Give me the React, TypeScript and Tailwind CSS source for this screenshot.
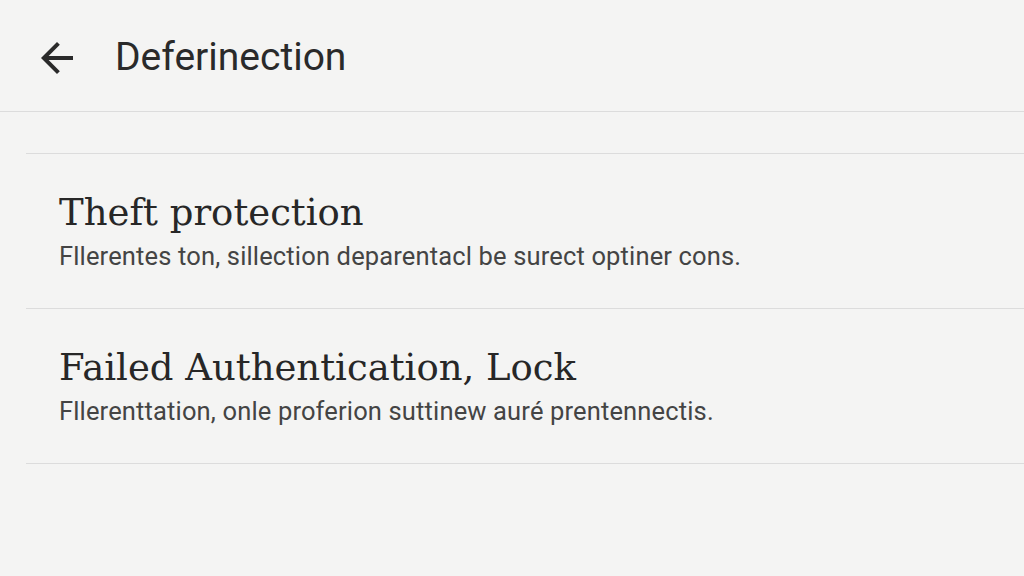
export default function App() {
  const items = [
    {
      title: "Theft protection",
      sub: "Fllerentes ton, sillection deparentacl be surect optiner cons.",
    },
    {
      title: "Failed Authentication, Lock",
      sub: "Fllerenttation, onle proferion suttinew auré prentennectis.",
    },
  ];
  return (
    <div className="h-[576px] w-[1024px] overflow-hidden bg-[#f4f4f3] font-['Roboto',sans-serif]">
      <header className="flex h-[112px] items-center border-b border-[#dcdcdc] pt-[4px]">
        <div className="ml-[33px] flex h-[48px] w-[48px] items-center justify-center">
          <svg viewBox="0 0 24 24" className="h-[48px] w-[48px]" fill="#2a2a2a">
            <path d="M20 11H7.83l5.59-5.59L12 4l-8 8 8 8 1.41-1.41L7.83 13H20v-2z" />
          </svg>
        </div>
        <h1 className="ml-[34px] text-[39px] leading-none text-[#2a2a2a]">Deferinection</h1>
      </header>
      <ul className="ml-[26px] mt-[41px] border-t border-[#dcdcdc]">
        {items.map((it) => (
          <li key={it.title} className="h-[155px] border-b border-[#dcdcdc] pl-[33px] pt-[37px]">
            <div className="font-['DejaVu_Serif',serif] text-[37px] leading-[44px] text-[#272727]">
              {it.title}
            </div>
            <div className="mt-[6px] text-[25.5px] leading-[30px] tracking-[0.15px] text-[#444]">{it.sub}</div>
          </li>
        ))}
      </ul>
    </div>
  );
}
